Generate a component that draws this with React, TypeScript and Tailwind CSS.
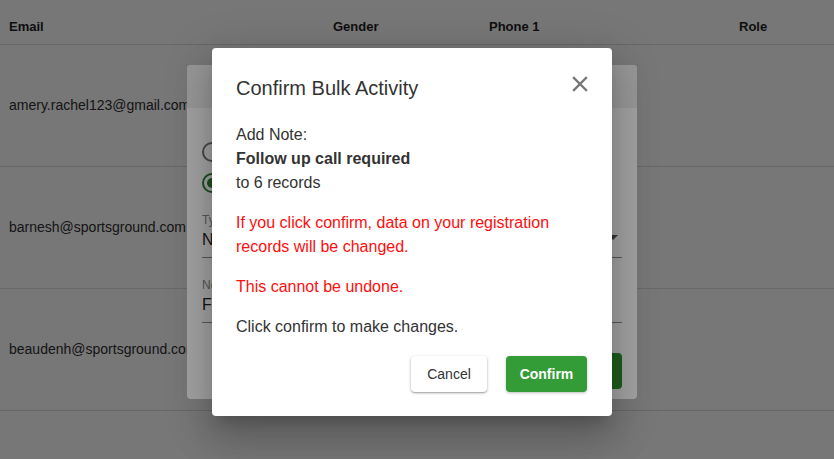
import React from "react";

const rows = [
  "amery.rachel123@gmail.com",
  "barnesh@sportsground.com",
  "beaudenh@sportsground.com",
];

export default function App() {
  return (
    <div className="relative w-[834px] h-[459px] overflow-hidden bg-white font-['Liberation_Sans',Arial,sans-serif]">
      {/* Table behind */}
      <div className="grid grid-cols-[324px_156px_250px_1fr] pl-[9px] pt-[9px] h-[45px] items-center border-b border-[#dedede] text-[13px] font-bold text-[#1f1f1f]">
        <div>Email</div>
        <div>Gender</div>
        <div>Phone 1</div>
        <div>Role</div>
      </div>
      {rows.map((email) => (
        <div
          key={email}
          className="grid grid-cols-[324px_156px_250px_1fr] pl-[9px] h-[122px] items-center border-b border-[#dedede] text-[14px] text-[#303030]"
        >
          <div>{email}</div>
          <div></div>
          <div></div>
          <div></div>
        </div>
      ))}

      <div className="absolute inset-0 bg-black/[0.27]" />

      {/* Bulk activity dialog behind */}
      <div className="absolute left-[187px] top-[65px] w-[450px] h-[334px] rounded bg-white overflow-hidden">
        <div className="h-[43px] bg-[#eeeeee]" />
        <div className="px-[15px] pt-[34px]">
          <div className="flex flex-col gap-[11px]">
            <div className="w-[20px] h-[20px] rounded-full border-2 border-[#757575]" />
            <div className="w-[20px] h-[20px] rounded-full border-2 border-[#2e7d32] flex items-center justify-center">
              <div className="w-[10px] h-[10px] rounded-full bg-[#2e7d32]" />
            </div>
          </div>
          <div className="mt-[20px] border-b border-[#8a8a8a] pb-[6px] relative">
            <div className="text-[12px] text-[#888] leading-[14px]">Type</div>
            <div className="text-[16px] text-[#222] leading-[22px] mt-[2px]">Note</div>
            <div className="absolute right-[4px] top-[22px] w-0 h-0 border-l-[5px] border-r-[5px] border-t-[5px] border-l-transparent border-r-transparent border-t-[#555]" />
          </div>
          <div className="mt-[20px] border-b border-[#8a8a8a] pb-[6px]">
            <div className="text-[12px] text-[#888] leading-[14px]">Note</div>
            <div className="text-[16px] text-[#222] leading-[22px] mt-[2px]">Follow up call required</div>
          </div>
          <div className="flex justify-end mt-[30px]">
            <div className="w-[100px] h-[36px] rounded bg-[#2f942f]" />
          </div>
        </div>
      </div>

      <div className="absolute inset-0 bg-black/[0.36]" />

      {/* Confirm dialog */}
      <div className="absolute left-[212px] top-[48px] w-[400px] h-[368px] rounded bg-white px-6 pt-[28px] text-[#333] shadow-[0_11px_15px_-7px_rgba(0,0,0,0.2),0_24px_38px_3px_rgba(0,0,0,0.14),0_9px_46px_8px_rgba(0,0,0,0.12)]">
        <div className="flex items-center justify-between">
          <h2 className="text-[20px] leading-[24px]">Confirm Bulk Activity</h2>
          <svg width="16" height="16" viewBox="0 0 16 16" className="-mt-[8px]">
            <path d="M2 2L14 14M14 2L2 14" stroke="#777" strokeWidth="2.4" strokeLinecap="square" />
          </svg>
        </div>
        <div className="mt-[23px] text-[16px] leading-[24px]">
          <p>Add Note:</p>
          <p className="font-bold">Follow up call required</p>
          <p>to 6 records</p>
        </div>
        <p className="mt-4 text-[16px] leading-[24px] text-[#ff0d0d]">
          If you click confirm, data on your registration records will be changed.
        </p>
        <p className="mt-4 text-[16px] leading-[24px] text-[#ff0d0d]">This cannot be undone.</p>
        <p className="mt-4 text-[16px] leading-[24px]">Click confirm to make changes.</p>
        <div className="mt-[17px] flex justify-end gap-[19px] pr-[1px]">
          <button className="w-[76px] h-[36px] rounded bg-white text-[14px] text-[#333] shadow-[0_1px_3px_rgba(0,0,0,0.3),0_1px_1px_rgba(0,0,0,0.14)]">
            Cancel
          </button>
          <button className="w-[81px] h-[36px] rounded bg-[#339c37] text-[14px] font-bold text-white shadow-[0_1px_3px_rgba(0,0,0,0.25)]">
            Confirm
          </button>
        </div>
      </div>
    </div>
  );
}
